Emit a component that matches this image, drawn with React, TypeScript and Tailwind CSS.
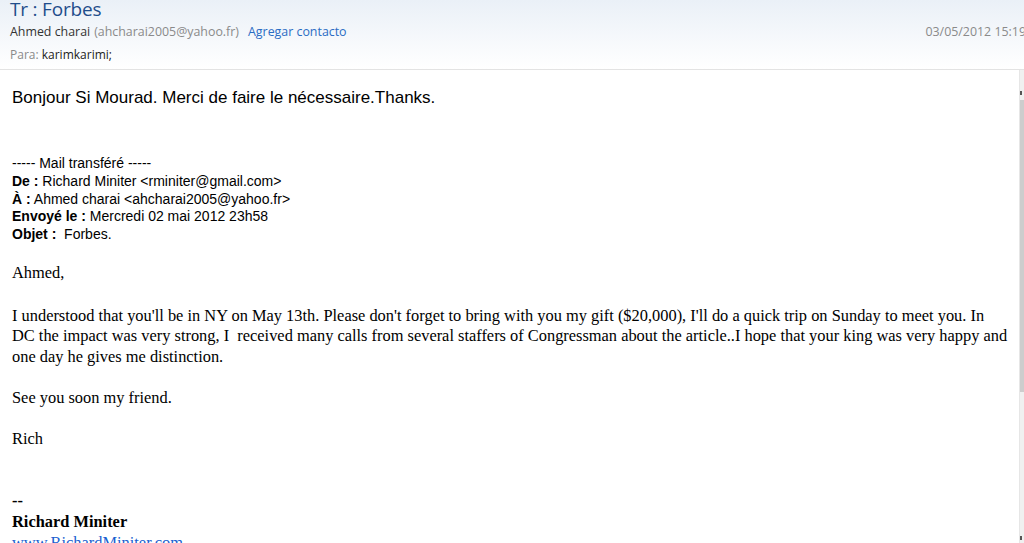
import React from "react";

const ui = { fontFamily: '"Open Sans", "Noto Sans", sans-serif' };
const arial = { fontFamily: '"Liberation Sans", Arial, sans-serif' };
const times = { fontFamily: '"Liberation Serif", "Times New Roman", serif' };

const App = () => {
  return (
    <div className="w-[1024px] h-[543px] overflow-hidden bg-white flex flex-col">
      {/* header */}
      <div
        className="h-[70px] shrink-0 border-b border-[#e3e3e3] bg-gradient-to-b from-[#eaf0f7] to-white pl-[10px]"
        style={ui}
      >
        <p className="text-[19px] leading-[24px] mt-[-3px] text-[#1f4d8b] tracking-[-0.2px]">
          Tr : Forbes
        </p>
        <div className="flex items-center text-[12.4px] leading-[18px] mt-[2px] whitespace-nowrap">
          <span className="text-[#333]">Ahmed charai</span>
          <span className="text-[#8a8a8a] ml-[4px]">(ahcharai2005@yahoo.fr)</span>
          <span className="text-[#2a6cc4] ml-[9px]">Agregar contacto</span>
          <span className="text-[#8a8a8a] ml-auto mr-[-2px]">03/05/2012 15:19</span>
        </div>
        <div className="text-[12px] leading-[16px] mt-[6px]">
          <span className="text-[#8a8a8a]">Para: </span>
          <span className="text-[#222]">karimkarimi;</span>
        </div>
      </div>

      {/* body */}
      <div className="flex flex-1 min-h-0">
        <div className="flex-1 border-r border-[#e6e6e6] pl-[12px] pr-[4px] pt-[18px] text-black">
          <p className="text-[17px] leading-[20px]" style={arial}>
            Bonjour Si Mourad. Merci de faire le nécessaire.Thanks.
          </p>

          <div className="mt-[47px] text-[14px] leading-[17.75px]" style={arial}>
            <p>----- Mail transféré -----</p>
            <p>
              <b>De :</b> Richard Miniter &lt;rminiter@gmail.com&gt;
            </p>
            <p>
              <b>À :</b> Ahmed charai &lt;ahcharai2005@yahoo.fr&gt;
            </p>
            <p>
              <b>Envoyé le :</b> Mercredi 02 mai 2012 23h58
            </p>
            <p>
              <b>Objet :</b>&nbsp; Forbes.
            </p>
          </div>

          <div className="mt-[19px] text-[16.4px] leading-[20.5px]" style={times}>
            <p>Ahmed,</p>
            <p className="mt-[22.5px] whitespace-nowrap">
              I understood that you'll be in NY on May 13th. Please don't forget to bring with you my gift ($20,000), I'll do a quick trip on Sunday to meet you. In
              <br />
              DC the impact was very strong, I&nbsp; received many calls from several staffers of Congressman about the article..I hope that your king was very happy and
              <br />
              one day he gives me distinction.
            </p>
            <p className="mt-[21px]">See you soon my friend.</p>
            <p className="mt-[20.5px]">Rich</p>
            <p className="mt-[41px] font-bold">--</p>
            <p className="font-bold leading-[22px]">Richard Miniter</p>
            <p className="text-[#1a5fd0] underline">www.RichardMiniter.com</p>
          </div>
        </div>

        {/* scrollbar */}
        <div className="w-[4px] shrink-0 bg-[#f0f0f0] flex flex-col">
          <div className="h-[25px] flex items-end">
            <div className="w-[2px] h-[4px] bg-[#555]" />
          </div>
          <div className="h-[5px]" />
          <div className="h-[292px] bg-[#cdcdcd]" />
          <div className="flex-1" />
          <div className="w-[2px] h-[4px] bg-[#555] mb-[3px]" />
        </div>
      </div>
    </div>
  );
};

export default App;
